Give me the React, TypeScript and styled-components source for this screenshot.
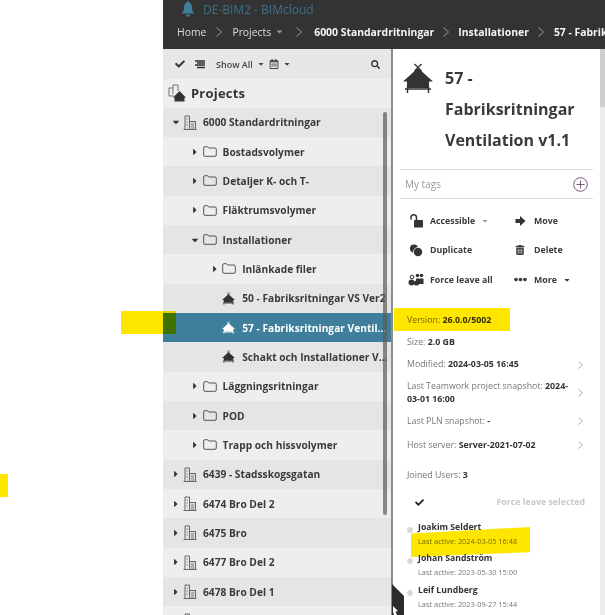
import React from "react";
import styled, { createGlobalStyle } from "styled-components";
import { FaCheck, FaTrashAlt, FaEllipsisH, FaSearch, FaCaretDown, FaCaretRight, FaRegCalendarAlt } from "react-icons/fa";

const GlobalStyle = createGlobalStyle`
  html, body { margin: 0; padding: 0; background: #fff; }
  body { font-family: "Open Sans", "Liberation Sans", sans-serif; overflow: hidden; }
`;

const Page = styled.div`
  position: relative;
  width: 605px;
  height: 615px;
  overflow: hidden;
  padding-left: 163px;
  box-sizing: border-box;
`;

const Header = styled.header`
  height: 49px;
  background: #333333;
  color: #f0f0f0;
`;

const TitleBar = styled.div`
  display: flex;
  align-items: center;
  gap: 8px;
  height: 18px;
  padding-left: 18px;
  font-size: 12px;
  color: #3f6f88;
`;

const Crumbs = styled.nav`
  display: flex;
  align-items: center;
  height: 27px;
  padding-left: 14px;
  font-size: 10.4px;
  white-space: nowrap;
  overflow: hidden;
`;

const Crumb = styled.span<{ $bold?: boolean }>`
  font-weight: ${(p) => (p.$bold ? 700 : 400)};
  color: ${(p) => (p.$bold ? "#f4f4f4" : "#dddddd")};
`;

const CrumbCaret = styled.span`
  display: inline-flex;
  margin-left: 4px;
  font-size: 9px;
  color: #999;
`;

const CrumbSep = styled.span<{ $gap: number }>`
  display: inline-flex;
  margin: 0 ${(p) => p.$gap}px;
`;

const Body = styled.div`
  display: flex;
  height: 566px;
`;

const LeftPane = styled.div`
  position: relative;
  width: 228px;
  flex: none;
  background: #eeeeee;
  overflow: hidden;
`;

const Divider = styled.div`
  width: 2px;
  flex: none;
  background: #8c8c8c;
`;

const Toolbar = styled.div`
  display: flex;
  align-items: center;
  gap: 10px;
  height: 30px;
  padding: 0 11px 0 12px;
  background: #e7e7e7;
  color: #333;
  font-size: 9px;
  font-weight: 600;
`;

const ToolLabel = styled.span`
  display: inline-flex;
  align-items: center;
  gap: 4px;
  color: #444;
`;

const ToolSpacer = styled.span`
  flex: 1;
`;

const PaneTitle = styled.div`
  display: flex;
  align-items: center;
  gap: 5px;
  height: 28.6px;
  padding-left: 5px;
  font-size: 13px;
  font-weight: 700;
  color: #333;
  letter-spacing: 0.2px;
`;

const Row = styled.div<{ $level: number; $alt?: boolean; $selected?: boolean }>`
  display: flex;
  align-items: center;
  height: 29.33px;
  padding-left: ${(p) => 5 + p.$level * 19.6}px;
  background: ${(p) => (p.$selected ? "#3f7f9b" : p.$alt ? "#e5e5e5" : "#eeeeee")};
  color: ${(p) => (p.$selected ? "#ffffff" : "#3a3a3a")};
  font-size: 10.2px;
  font-weight: 700;
  white-space: nowrap;
  overflow: hidden;
`;

const Caret = styled.span`
  display: inline-flex;
  justify-content: center;
  width: 15px;
  flex: none;
  font-size: 10px;
  color: #333;
`;

const IconSlot = styled.span`
  display: inline-flex;
  align-items: center;
  justify-content: flex-start;
  width: 20px;
  flex: none;
`;

const Clip = styled.span`
  overflow: hidden;
  text-overflow: ellipsis;
  width: 100%;
  padding-right: 2px;
`;

const TreeScroll = styled.div`
  position: absolute;
  left: 220px;
  top: 63px;
  width: 4px;
  height: 403px;
  border-radius: 2px;
  background: rgba(90, 90, 90, 0.7);
`;

const RightPane = styled.aside`
  position: relative;
  flex: 1;
  display: flex;
  flex-direction: column;
  padding: 0 12px 0 3px;
  color: #333;
  overflow: hidden;
`;

const ScrollTrack = styled.div`
  position: absolute;
  right: 0;
  top: 0;
  bottom: 0;
  width: 5px;
  background: #ececec;
`;

const ScrollThumb = styled.div`
  height: 58px;
  background: #cfcfcf;
`;

const TitleRow = styled.div`
  flex: none;
  display: flex;
  align-items: flex-start;
  gap: 12px;
  box-sizing: border-box;
  height: 120px;
  padding: 13.5px 0 0 7px;
`;

const ItemName = styled.h1`
  margin: 0;
  font-size: 16px;
  line-height: 31px;
  font-weight: 700;
  color: #3a3a3a;
`;

const TagsRow = styled.div`
  flex: none;
  display: flex;
  align-items: center;
  justify-content: space-between;
  box-sizing: border-box;
  height: 30px;
  margin-left: 4px;
  padding: 0 5px;
  border-top: 1px solid #ddd;
  border-bottom: 1px solid #ddd;
  font-size: 10px;
  color: #999;
`;

const Actions = styled.div`
  flex: none;
  display: grid;
  grid-template-columns: 104px 1fr;
  grid-auto-rows: 29.5px;
  align-items: center;
  margin: 7px 0 0 12px;
`;

const Action = styled.div`
  display: flex;
  align-items: center;
  gap: 6px;
  font-size: 8.8px;
  font-weight: 700;
  color: #3a3a3a;
`;

const ActionIcon = styled.span`
  display: inline-flex;
  justify-content: center;
  width: 16px;
  font-size: 11px;
`;

const Muted = styled.span`
  color: #999;
  display: inline-flex;
`;

const Info = styled.div`
  flex: none;
  display: flex;
  flex-direction: column;
  margin: 14.5px 0 0 11px;
`;

const InfoRow = styled.div<{ $h: number }>`
  display: flex;
  align-items: center;
  justify-content: space-between;
  height: ${(p) => p.$h}px;
  padding-right: 10px;
  font-size: 8.8px;
  line-height: 13px;
  color: #777;

  b {
    font-weight: 700;
    color: #333;
  }
`;

const InfoText = styled.span`
  width: 178px;
`;

const Chevron = styled.span`
  flex: none;
  display: inline-flex;
`;

const Joined = styled.div`
  flex: none;
  margin: 11.5px 0 0 11px;
  font-size: 8.8px;
  line-height: 13px;
  color: #777;

  b {
    font-weight: 700;
    color: #333;
  }
`;

const SelectRow = styled.div`
  flex: none;
  display: flex;
  align-items: center;
  justify-content: space-between;
  height: 13px;
  margin: 14px 8px 0 19px;
  font-size: 8.8px;
  font-weight: 700;
  color: #c9c9c9;
`;

const Users = styled.div`
  flex: none;
  display: flex;
  flex-direction: column;
  margin: 12px 0 0 11px;
`;

const User = styled.div`
  position: relative;
  height: 31.5px;
  padding-left: 11px;
`;

const Dot = styled.span`
  position: absolute;
  left: 0;
  top: 6px;
  width: 6px;
  height: 6px;
  border-radius: 50%;
  background: #d8d8d8;
`;

const UserName = styled.div`
  font-size: 8.7px;
  line-height: 13px;
  font-weight: 700;
  color: #333;
`;

const UserActive = styled.div`
  font-size: 7.4px;
  line-height: 14px;
  color: #777;
`;

const Marker = styled.div<{ $x: number; $y: number; $w: number; $h: number }>`
  position: absolute;
  left: ${(p) => p.$x}px;
  top: ${(p) => p.$y}px;
  width: ${(p) => p.$w}px;
  height: ${(p) => p.$h}px;
  background: #ffe600;
  mix-blend-mode: multiply;
  pointer-events: none;
`;

const SkewMarker = styled(Marker)`
  clip-path: polygon(0 22%, 100% 0, 100% 84%, 0 100%);
`;

const Handle = styled.svg`
  position: absolute;
  left: 392px;
  top: 584px;
`;

const House = ({ size = 14, color = "#333" }: { size?: number; color?: string }) => (
  <svg width={size} height={size} viewBox="0 0 30 30" fill="none">
    <path d="M15 5 L30 18.5 H26 V25 H4 V18.5 H0 Z" fill={color} />
    <path d="M11.5 1 L18.5 8 M18.5 1 L11.5 8" stroke={color} strokeWidth="1.4" />
    <path d="M2 26 H28 M4.5 23 V30 M25.5 23 V30" stroke={color} strokeWidth="1.4" />
  </svg>
);

const Building = () => (
  <svg width="14" height="15" viewBox="0 0 14 15" fill="none" stroke="#666" strokeWidth="1">
    <path d="M0.5 14.5 H13.5" />
    <path d="M2 14 V1 H6.5 V14" />
    <rect x="6.5" y="6.5" width="6" height="8" fill="#ddd" />
    <path d="M8 9 H11 M8 11 H11 M8 13 H11 M3.5 4 H5 M3.5 7 H5 M3.5 10 H5" strokeWidth="0.8" />
  </svg>
);

const Folder = () => (
  <svg width="14" height="11" viewBox="0 0 14 11" fill="none" stroke="#555" strokeWidth="1">
    <path d="M0.7 2 Q0.7 0.7 2 0.7 H4.5 L5.7 2 H12 Q13.3 2 13.3 3.3 V9 Q13.3 10.3 12 10.3 H2 Q0.7 10.3 0.7 9 Z" />
  </svg>
);

const ProjectsIcon = () => (
  <svg width="18" height="18" viewBox="0 0 18 18" fill="none">
    <path d="M1 12 V4 H5 V1 H10 V7 M5 4 V10 M1 12 H6" stroke="#777" strokeWidth="1" />
    <path d="M11.5 7 L18 13.5 H16.5 V17.5 H6.5 V13.5 H5 Z" fill="#333" />
  </svg>
);

const ListIcon = () => (
  <svg width="11" height="9" viewBox="0 0 11 9" fill="none" stroke="#333">
    <path d="M0 1 H10 M2 3 H10 M0 5 H10 M2 7.5 H10" strokeWidth="1.3" />
  </svg>
);

const ChevronThin = ({ size = 10, color = "#aaa" }: { size?: number; color?: string }) => (
  <svg width={size * 0.6} height={size} viewBox="0 0 6 10" fill="none" stroke={color} strokeWidth="0.9">
    <path d="M0.5 0.5 L5.5 5 L0.5 9.5" />
  </svg>
);

const Bell = () => (
  <svg width="14" height="16" viewBox="0 0 14 16" fill="#3f7f9b">
    <path d="M7 0 C8 0 8 1 8 1.5 C10.5 2.2 11 4.5 11 7 C11 10 12 11 13.5 12.5 H0.5 C2 11 3 10 3 7 C3 4.5 3.5 2.2 6 1.5 C6 1 6 0 7 0 Z" />
    <path d="M5 13.5 H9 C9 15 8 16 7 16 C6 16 5 15 5 13.5 Z" />
  </svg>
);

const LockOpen = () => (
  <svg width="15" height="15" viewBox="0 0 15 15" fill="none">
    <rect x="5" y="7" width="9" height="7.5" rx="0.8" fill="#333" />
    <path d="M2 6.5 V4 A2.8 2.8 0 0 1 7.5 4 V7.5" stroke="#333" strokeWidth="1.5" />
  </svg>
);

const MoveIcon = () => (
  <svg width="11" height="10" viewBox="0 0 11 10" fill="#333">
    <path d="M0.5 3 H5 V0 L10.5 5 L5 10 V7 H0.5 Z" />
  </svg>
);

const DuplicateIcon = () => (
  <svg width="14" height="13" viewBox="0 0 14 13" fill="#333">
    <circle cx="5" cy="4.5" r="4" />
    <circle cx="9" cy="8" r="4.6" stroke="#fff" strokeWidth="0.8" />
  </svg>
);

const UsersIcon = () => (
  <svg width="16" height="13" viewBox="0 0 16 13" fill="#333">
    <circle cx="9.5" cy="2.5" r="1.8" />
    <circle cx="13.5" cy="2.5" r="1.8" />
    <path d="M8 5.5 H15.5 V11 H10 V8 H8 Z" />
    <circle cx="4" cy="4" r="1.8" fill="none" stroke="#333" />
    <circle cx="3.5" cy="9.5" r="3" />
    <circle cx="8.5" cy="10" r="2.6" />
  </svg>
);

const PlusCircle = () => (
  <svg width="15" height="15" viewBox="0 0 15 15" fill="none" stroke="#6b4a6b" strokeWidth="0.9">
    <circle cx="7.5" cy="7.5" r="6.8" />
    <path d="M7.5 3.5 V11.5 M3.5 7.5 H11.5" />
  </svg>
);

type Node = {
  label: string;
  level: number;
  kind: "building" | "folder" | "project";
  open?: boolean;
  selected?: boolean;
};

const tree: Node[] = [
  { label: "6000 Standardritningar", level: 0, kind: "building", open: true },
  { label: "Bostadsvolymer", level: 1, kind: "folder" },
  { label: "Detaljer K- och T-", level: 1, kind: "folder" },
  { label: "Fläktrumsvolymer", level: 1, kind: "folder" },
  { label: "Installationer", level: 1, kind: "folder", open: true },
  { label: "Inlänkade filer", level: 2, kind: "folder" },
  { label: "50 - Fabriksritningar VS Ver2", level: 2, kind: "project" },
  { label: "57 - Fabriksritningar Ventilation v1.1", level: 2, kind: "project", selected: true },
  { label: "Schakt och Installationer Ventilation", level: 2, kind: "project" },
  { label: "Läggningsritningar", level: 1, kind: "folder" },
  { label: "POD", level: 1, kind: "folder" },
  { label: "Trapp och hissvolymer", level: 1, kind: "folder" },
  { label: "6439 - Stadsskogsgatan", level: 0, kind: "building" },
  { label: "6474 Bro Del 2", level: 0, kind: "building" },
  { label: "6475 Bro", level: 0, kind: "building" },
  { label: "6477 Bro Del 2", level: 0, kind: "building" },
  { label: "6478 Bro Del 1", level: 0, kind: "building" },
  { label: "", level: 0, kind: "building" },
];

const users = [
  { name: "Joakim Seldert", active: "Last active: 2024-03-05 16:48" },
  { name: "Johan Sandström", active: "Last active: 2023-05-30 15:00" },
  { name: "Leif Lundberg", active: "Last active: 2023-09-27 15:44" },
];

const infoChevron = (
  <Chevron>
    <ChevronThin size={8} color="#888" />
  </Chevron>
);

const TreeRow = ({ node, alt }: { node: Node; alt: boolean }) => (
  <Row $level={node.level} $alt={alt} $selected={node.selected}>
    <Caret>
      {node.kind !== "project" && (node.open ? <FaCaretDown /> : <FaCaretRight />)}
    </Caret>
    <IconSlot>
      {node.kind === "building" && <Building />}
      {node.kind === "folder" && <Folder />}
      {node.kind === "project" && <House size={13} color={node.selected ? "#fff" : "#333"} />}
    </IconSlot>
    <Clip>{node.label}</Clip>
  </Row>
);

export default function App() {
  return (
    <>
      <GlobalStyle />
      <Page>
        <Header>
          <TitleBar>
            <Bell />
            DE-BIM2 - BIMcloud
          </TitleBar>
          <Crumbs>
            <Crumb>Home</Crumb>
            <CrumbSep $gap={10}>
              <ChevronThin />
            </CrumbSep>
            <Crumb>Projects</Crumb>
            <CrumbCaret>
              <FaCaretDown />
            </CrumbCaret>
            <CrumbSep $gap={12}>
              <ChevronThin />
            </CrumbSep>
            <Crumb $bold>6000 Standardritningar</Crumb>
            <CrumbSep $gap={9}>
              <ChevronThin />
            </CrumbSep>
            <Crumb $bold>Installationer</Crumb>
            <CrumbSep $gap={9.5}>
              <ChevronThin />
            </CrumbSep>
            <Crumb $bold>57 - Fabrik</Crumb>
          </Crumbs>
        </Header>
        <Body>
          <LeftPane>
            <Toolbar>
              <FaCheck size={10} />
              <ListIcon />
              <ToolLabel>
                Show All
                <FaCaretDown size={8} />
                <FaRegCalendarAlt size={10} />
                <FaCaretDown size={8} />
              </ToolLabel>
              <ToolSpacer />
              <FaSearch size={9} />
            </Toolbar>
            <PaneTitle>
              <ProjectsIcon />
              Projects
            </PaneTitle>
            {tree.map((node, i) => (
              <TreeRow key={i} node={node} alt={i % 2 === 0} />
            ))}
            <TreeScroll />
          </LeftPane>
          <Divider />
          <RightPane>
            <ScrollTrack>
              <ScrollThumb />
            </ScrollTrack>
            <TitleRow>
              <House size={30} />
              <ItemName>
                57 -<br />
                Fabriksritningar
                <br />
                Ventilation v1.1
              </ItemName>
            </TitleRow>
            <TagsRow>
              My tags
              <PlusCircle />
            </TagsRow>
            <Actions>
              <Action>
                <ActionIcon>
                  <LockOpen />
                </ActionIcon>
                Accessible
                <Muted>
                  <FaCaretDown size={8} />
                </Muted>
              </Action>
              <Action>
                <ActionIcon>
                  <MoveIcon />
                </ActionIcon>
                Move
              </Action>
              <Action>
                <ActionIcon>
                  <DuplicateIcon />
                </ActionIcon>
                Duplicate
              </Action>
              <Action>
                <ActionIcon>
                  <FaTrashAlt size={10} />
                </ActionIcon>
                Delete
              </Action>
              <Action>
                <ActionIcon>
                  <UsersIcon />
                </ActionIcon>
                Force leave all
              </Action>
              <Action>
                <ActionIcon>
                  <FaEllipsisH size={13} />
                </ActionIcon>
                More <FaCaretDown size={8} />
              </Action>
            </Actions>
            <Info>
              <InfoRow $h={22}>
                <InfoText>
                  Version: <b>26.0.0/5002</b>
                </InfoText>
              </InfoRow>
              <InfoRow $h={22}>
                <InfoText>
                  Size: <b>2.0 GB</b>
                </InfoText>
              </InfoRow>
              <InfoRow $h={23}>
                <InfoText>
                  Modified: <b>2024-03-05 16:45</b>
                </InfoText>
                {infoChevron}
              </InfoRow>
              <InfoRow $h={33}>
                <InfoText>
                  Last Teamwork project snapshot: <b>2024-03-01 16:00</b>
                </InfoText>
                {infoChevron}
              </InfoRow>
              <InfoRow $h={24}>
                <InfoText>
                  Last PLN snapshot: <b>-</b>
                </InfoText>
                {infoChevron}
              </InfoRow>
              <InfoRow $h={24}>
                <InfoText>
                  Host server: <b>Server-2021-07-02</b>
                </InfoText>
                {infoChevron}
              </InfoRow>
            </Info>
            <Joined>
              Joined Users: <b>3</b>
            </Joined>
            <SelectRow>
              <FaCheck size={9} color="#222" />
              Force leave selected
            </SelectRow>
            <Users>
              {users.map((u) => (
                <User key={u.name}>
                  <Dot />
                  <UserName>{u.name}</UserName>
                  <UserActive>{u.active}</UserActive>
                </User>
              ))}
            </Users>
          </RightPane>
        </Body>
        <Marker $x={121} $y={311} $w={55} $h={23} />
        <Marker $x={0} $y={474} $w={8} $h={23} />
        <Marker $x={394} $y={308} $w={116} $h={23} />
        <SkewMarker $x={411} $y={527} $w={119} $h={30} />
        <Handle width="13" height="31" viewBox="0 0 13 31">
          <path d="M0 0 L12 12 V31 H0 Z" fill="#2c2c2c" />
          <path d="M1 22 L6 27 L3.5 27.5 L5 31 H2 L1 28 Z" fill="#fff" />
        </Handle>
      </Page>
    </>
  );
}
